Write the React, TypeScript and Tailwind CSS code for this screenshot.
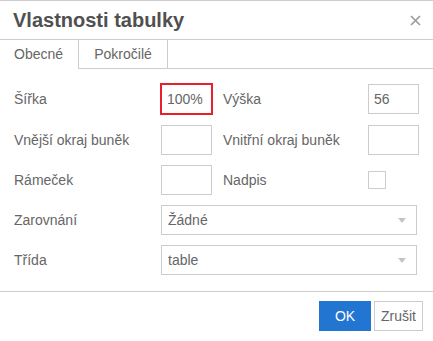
import React from "react";

const font = { fontFamily: '"Liberation Sans", Arial, sans-serif' };

function TextBox({ value, focused }: { value?: string; focused?: boolean }) {
  return (
    <div
      className={
        "flex h-[30px] w-[51px] items-center border px-[5px] text-[14px] text-[#666666] " +
        (focused ? "border-[#e8202a] ring-1 ring-[#e8202a]" : "border-[#cccccc]")
      }
    >
      {value}
    </div>
  );
}

function SelectBox({ value }: { value: string }) {
  return (
    <div className="flex h-[30px] w-[256px] items-center justify-between border border-[#cccccc] pl-[6px] pr-[10px] text-[14px] text-[#666666]">
      <span>{value}</span>
      <svg width="8" height="5" viewBox="0 0 8 5" aria-hidden="true">
        <path d="M0 0h8L4 5z" fill="#c4c4c4" />
      </svg>
    </div>
  );
}

export default function App() {
  return (
    <div className="h-[341px] w-[433px] overflow-hidden bg-white" style={font}>
      <div className="border-t border-[#cccccc]">
        {/* Header */}
        <div className="flex h-[39px] items-center justify-between border-b border-[#cccccc] pl-[13px] pr-[12px]">
          <h1 className="text-[20px] font-bold leading-none text-[#505050]">Vlastnosti tabulky</h1>
          <svg width="11" height="11" viewBox="0 0 11 11" aria-hidden="true">
            <path d="M1 1l9 9M10 1l-9 9" stroke="#999999" strokeWidth="1.6" />
          </svg>
        </div>

        {/* Tabs */}
        <div className="flex h-[29px]">
          <div className="flex w-[79px] items-center border-r border-[#cccccc] pl-[14px] text-[14px] text-[#666666]">
            Obecné
          </div>
          <div className="flex w-[89px] items-center justify-center border-b border-r border-[#cccccc] text-[14px] text-[#666666]">
            Pokročilé
          </div>
          <div className="flex-1 border-b border-[#cccccc]" />
        </div>

        {/* Form */}
        <div className="flex flex-col pb-[16px] pl-[14px] pt-[15px] text-[14px] text-[#666666]">
          <div className="flex h-[30px] items-center">
            <span className="w-[147px]">Šířka</span>
            <TextBox value="100%" focused />
            <span className="ml-[11px] w-[145px]">Výška</span>
            <TextBox value="56" />
          </div>
          <div className="mt-[11px] flex h-[30px] items-center">
            <span className="w-[147px]">Vnější okraj buněk</span>
            <TextBox />
            <span className="ml-[11px] w-[145px]">Vnitřní okraj buněk</span>
            <TextBox />
          </div>
          <div className="mt-[10px] flex h-[30px] items-center">
            <span className="w-[147px]">Rámeček</span>
            <TextBox />
            <span className="ml-[11px] w-[145px]">Nadpis</span>
            <div className="h-[18px] w-[18px] border border-[#cccccc]" />
          </div>
          <div className="mt-[10px] flex h-[30px] items-center">
            <span className="w-[147px]">Zarovnání</span>
            <SelectBox value="Žádné" />
          </div>
          <div className="mt-[10px] flex h-[30px] items-center">
            <span className="w-[147px]">Třída</span>
            <SelectBox value="table" />
          </div>
        </div>

        {/* Footer */}
        <div className="flex justify-end gap-[3px] border-t border-[#cccccc] pb-[10px] pr-[10px] pt-[9px]">
          <button type="button" className="h-[30px] w-[52px] bg-[#2276d2] text-[14px] text-white">
            OK
          </button>
          <button
            type="button"
            className="h-[30px] w-[49px] border border-[#cccccc] bg-white text-[14px] text-[#666666]"
          >
            Zrušit
          </button>
        </div>
      </div>
    </div>
  );
}
